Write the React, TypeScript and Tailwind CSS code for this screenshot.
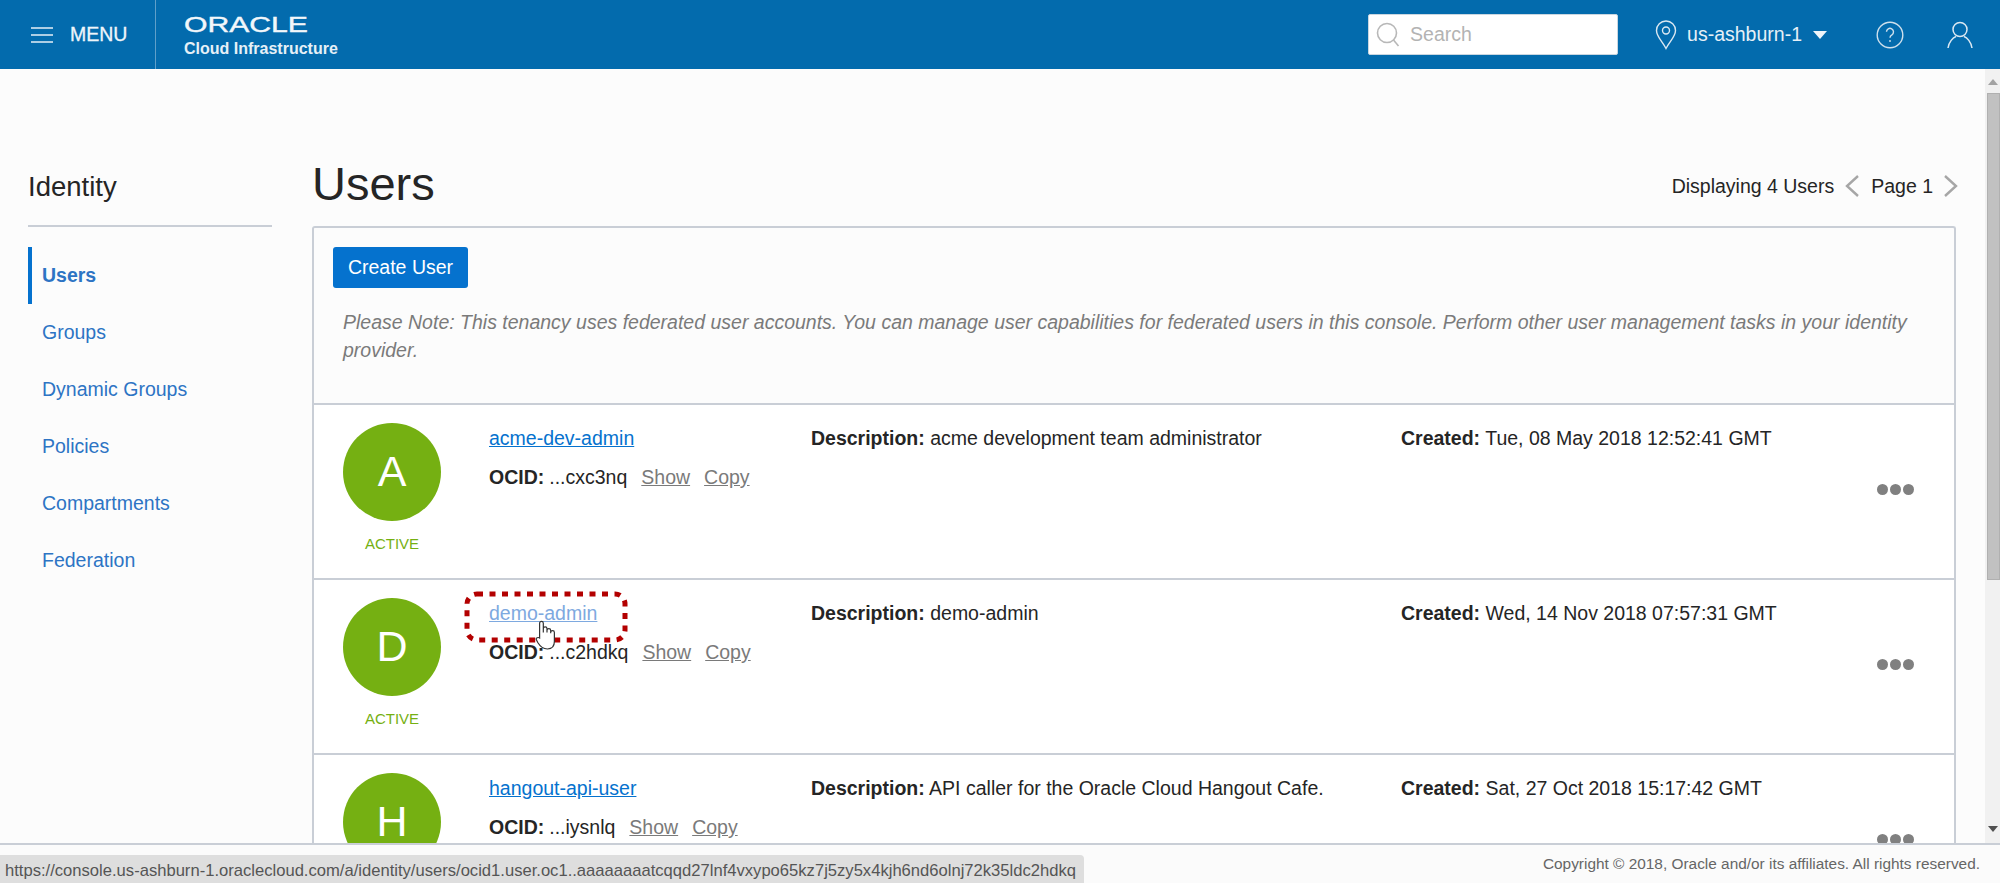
import React from 'react';

const font = 'font-["Liberation_Sans",Arial,sans-serif]';

interface UserRow {
  letter: string;
  name: string;
  ocid: string;
  description: string;
  created: string;
  hovered?: boolean;
}

const users: UserRow[] = [
  { letter: 'A', name: 'acme-dev-admin', ocid: '...cxc3nq', description: 'acme development team administrator', created: 'Tue, 08 May 2018 12:52:41 GMT' },
  { letter: 'D', name: 'demo-admin', ocid: '...c2hdkq', description: 'demo-admin', created: 'Wed, 14 Nov 2018 07:57:31 GMT', hovered: true },
  { letter: 'H', name: 'hangout-api-user', ocid: '...iysnlq', description: 'API caller for the Oracle Cloud Hangout Cafe.', created: 'Sat, 27 Oct 2018 15:17:42 GMT' },
];

const navItems = ['Users', 'Groups', 'Dynamic Groups', 'Policies', 'Compartments', 'Federation'];

const TopBar = () => (
  <header className="flex h-[69px] shrink-0 items-center bg-[#036bad] text-white">
    <div className="flex h-full w-[156px] shrink-0 items-center border-r border-[#5f9fc9] pl-[31px]">
      <svg width="22" height="16" viewBox="0 0 22 16" className="mr-[17px] text-[#e6f0f7]" stroke="currentColor" strokeWidth="1.5">
        <path d="M0 1h22M0 8h22M0 15h22" />
      </svg>
      <span className="text-[19.5px] leading-none text-[#eef5fa] [-webkit-text-stroke:0.3px_#eef5fa]">MENU</span>
    </div>
    <div className="ml-[28px] mt-[4px] flex flex-col">
      <span className="h-[20px] origin-left scale-x-[1.37] text-[22px] leading-[20px] text-[#f2f7fb] [-webkit-text-stroke:0.4px_#f2f7fb]">ORACLE</span>
      <span className="mt-[4px] text-[16px] font-bold leading-[20px] text-[#e6f0f7]">Cloud Infrastructure</span>
    </div>
    <div className="ml-auto flex h-[41px] w-[250px] items-center rounded-[2px] border border-[#c9d6e0] bg-white pl-[7px]">
      <svg width="24" height="26" viewBox="0 0 24 26" fill="none" stroke="#b8b8b8" strokeWidth="1.6">
        <circle cx="11" cy="11" r="9.5" />
        <path d="M17.5 18l5 6" />
      </svg>
      <span className="ml-[10px] text-[19.5px] text-[#b3b3b3]">Search</span>
    </div>
    <svg width="22" height="30" viewBox="0 0 22 30" fill="none" stroke="#dbe8f2" strokeWidth="1.4" className="ml-[37px]">
      <path d="M11 28.5C7 21 1.5 16.5 1.5 10.5a9.5 9.5 0 0 1 19 0C20.5 16.5 15 21 11 28.5z" />
      <circle cx="11" cy="10.5" r="3.5" />
    </svg>
    <span className="ml-[10px] text-[19.5px] text-[#e6f0f7]">us-ashburn-1</span>
    <svg width="14" height="8" viewBox="0 0 14 8" className="ml-[11px]" fill="#eef5fa">
      <path d="M0 0h14L7 8z" />
    </svg>
    <svg width="28" height="28" viewBox="0 0 28 28" fill="none" stroke="#cfe0ec" strokeWidth="1.4" className="ml-[49px]">
      <circle cx="14" cy="14" r="12.8" />
      <path d="M10.5 10.8a3.5 3.5 0 1 1 5.4 3c-1.3.8-1.9 1.5-1.9 3" />
      <path d="M14 19v2" />
    </svg>
    <svg width="26" height="28" viewBox="0 0 26 28" fill="none" stroke="#dbe8f2" strokeWidth="1.5" className="ml-[43px] mr-[27px]">
      <circle cx="13" cy="8.5" r="7" />
      <path d="M1 27c.8-6 5-10.5 8-11.5M25 27c-.8-6-5-10.5-8-11.5" />
    </svg>
  </header>
);

const Sidebar = () => (
  <aside className="ml-[28px] w-[244px] shrink-0 pt-[101px]">
    <h2 className="h-[57px] border-b-2 border-[#c9ced6] text-[27.5px] font-normal leading-[34px] text-[#252525]">Identity</h2>
    <nav className="mt-[20px] flex flex-col">
      {navItems.map((item, i) => (
        <a
          key={item}
          className={`flex h-[57px] items-center text-[19.5px] text-[#2d74c4] ${i === 0 ? 'border-l-4 border-[#0572ce] pl-[10px] font-bold' : 'pl-[14px]'}`}
        >
          {item}
        </a>
      ))}
    </nav>
  </aside>
);

const Row = ({ user }: { user: UserRow }) => (
  <div className="relative flex h-[175px] shrink-0 border-t-2 border-[#c9ced6] bg-white">
    <div className="ml-[29px] flex w-[98px] shrink-0 flex-col items-center pt-[18px]">
      <div className="flex h-[98px] w-[98px] items-center justify-center rounded-full bg-[#75b012] pb-[2px] text-[43px] text-white">{user.letter}</div>
      <span className="mt-[14px] text-[15px] leading-[18px] text-[#75b012]">ACTIVE</span>
    </div>
    <div className="ml-[48px] w-[322px] shrink-0 pt-[20px]">
      <a className={`block text-[19.5px] leading-[26px] underline ${user.hovered ? 'text-[#7ea9e0]' : 'text-[#0572ce]'}`}>{user.name}</a>
      <div className="mt-[13px] flex text-[19.5px] leading-[26px] text-[#252525]">
        <b>OCID:</b>
        <span className="ml-[5px]">{user.ocid}</span>
        <a className="ml-[14px] text-[#7a7a7a] underline">Show</a>
        <a className="ml-[14px] text-[#7a7a7a] underline">Copy</a>
      </div>
    </div>
    <div className="w-[590px] shrink-0 pt-[20px] text-[19.5px] leading-[26px] text-[#252525]">
      <b>Description:</b> {user.description}
    </div>
    <div className="pt-[20px] text-[19.5px] leading-[26px] text-[#252525]">
      <b>Created:</b> {user.created}
    </div>
    <div className="absolute right-[40px] top-[79px] flex gap-[2px]">
      <span className="h-[11px] w-[11px] rounded-full bg-[#808080]" />
      <span className="h-[11px] w-[11px] rounded-full bg-[#808080]" />
      <span className="h-[11px] w-[11px] rounded-full bg-[#808080]" />
    </div>
    {user.hovered && (
      <>
        <svg width="164" height="52" viewBox="0 0 164 52" fill="none" className="absolute left-[150px] top-[11px]">
          <rect x="3" y="3" width="158" height="46" rx="10" stroke="#b30000" strokeWidth="5" strokeDasharray="6 6.5" />
        </svg>
        <svg width="24" height="34" viewBox="0 0 26 36" fill="#fff" stroke="#333" strokeWidth="1.3" className="absolute left-[221px] top-[40px]">
          <path d="M5 19V3a2 2 0 0 1 4 0v10V9a2 2 0 0 1 4 0v4-2a2 2 0 0 1 4 0v3-1a2 2 0 0 1 4 0v10c0 5-3 8-7.5 8S6 29 3 24l-1.5-3c-1-2 2-3 3.5-2z" />
        </svg>
      </>
    )}
  </div>
);

const Content = () => (
  <section className="ml-[40px] min-w-0 flex-1 pt-[88px]">
    <div className="flex h-[69px] items-start justify-between">
      <h1 className="text-[47px] font-normal leading-[54px] text-[#252525]">Users</h1>
      <div className="-mr-[3px] mt-[16px] flex items-center text-[19.5px] leading-[26px] text-[#252525]">
        <span>Displaying 4 Users</span>
        <svg width="16" height="24" viewBox="0 0 16 24" fill="none" stroke="#a6a6a6" strokeWidth="2.4" className="ml-[10px]">
          <path d="M14 2L3 12l11 10" />
        </svg>
        <span className="ml-[11px]">Page 1</span>
        <svg width="16" height="24" viewBox="0 0 16 24" fill="none" stroke="#a6a6a6" strokeWidth="2.4" className="ml-[10px]">
          <path d="M2 2l11 10L2 22" />
        </svg>
      </div>
    </div>
    <div className="flex h-[700px] flex-col rounded-t-[3px] border-x-2 border-t-2 border-[#c9ced6]">
      <div className="h-[175px] shrink-0 pl-[19px] pt-[19px]">
        <button className="h-[41px] w-[135px] rounded-[3px] bg-[#0572ce] text-[19.5px] text-white">Create User</button>
        <p className="ml-[10px] mt-[20px] w-[1590px] text-[19.5px] italic leading-[28px] text-[#7a7a7a]">
          Please Note: This tenancy uses federated user accounts. You can manage user capabilities for federated users in this console. Perform other user management tasks in your identity provider.
        </p>
      </div>
      {users.map(u => <Row key={u.name} user={u} />)}
    </div>
  </section>
);

const Scrollbar = () => (
  <div className="ml-[29px] flex w-[15px] shrink-0 flex-col items-center bg-[#f1f1f1] pt-[10px]">
    <svg width="10" height="6" viewBox="0 0 10 6" fill="#a3a3a3"><path d="M5 0l5 6H0z" /></svg>
    <div className="ml-[2px] mt-[8px] h-[487px] w-[13px] border border-[#b0b0b0] bg-[#c1c1c1]" />
    <svg width="10" height="6" viewBox="0 0 10 6" fill="#505050" className="mb-[11px] mt-auto"><path d="M0 0h10L5 6z" /></svg>
  </div>
);

export default function App() {
  return (
    <div className={`relative flex h-[883px] w-[2000px] flex-col overflow-hidden bg-[#fcfcfc] ${font}`}>
      <TopBar />
      <main className="flex min-h-0 flex-1 overflow-hidden">
        <Sidebar />
        <Content />
        <Scrollbar />
      </main>
      <footer className="flex h-[40px] shrink-0 items-center justify-end border-t-2 border-[#c9ced6] bg-[#fbfbfb] pr-[20px] text-[15.4px] text-[#666]">
        Copyright © 2018, Oracle and/or its affiliates. All rights reserved.
      </footer>
      <div className="absolute bottom-0 left-0 flex h-[28px] w-[1084px] items-center overflow-hidden whitespace-nowrap rounded-tr-[4px] bg-[#dedede] pl-[5px] pt-[4px] text-[16.6px] text-[#555]">
        https://console.us-ashburn-1.oraclecloud.com/a/identity/users/ocid1.user.oc1..aaaaaaaatcqqd27lnf4vxypo65kz7j5zy5x4kjh6nd6olnj72k35ldc2hdkq
      </div>
    </div>
  );
}
